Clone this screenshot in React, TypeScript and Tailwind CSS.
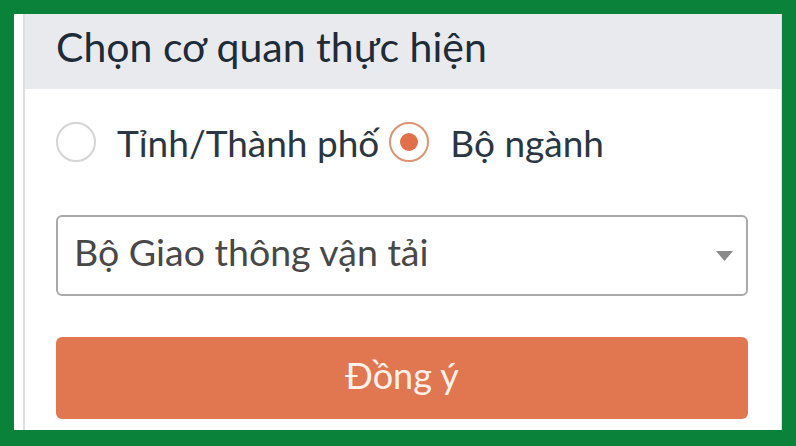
import { useState } from 'react';

const font = { fontFamily: 'Lato, "Noto Sans", sans-serif' };

function Radio({ checked, label, onClick }: { checked: boolean; label: string; onClick: () => void }) {
  return (
    <button type="button" onClick={onClick} className="flex items-center gap-[21px]">
      <span
        className={`flex h-[40px] w-[40px] items-center justify-center rounded-full border-2 bg-white ${
          checked ? 'border-[#dc9373]' : 'border-[#d4d4d4]'
        }`}
      >
        {checked && <span className="h-[18px] w-[18px] rounded-full bg-[#e07049]" />}
      </span>
      <span className="text-[37px] leading-none text-[#2a3641]">{label}</span>
    </button>
  );
}

export default function App() {
  const [type, setType] = useState<'tinh' | 'bo'>('bo');

  return (
    <div className="h-[446px] w-[796px] bg-[#0b823a] pb-[16px] pl-[14px] pr-[14px] pt-[14px]" style={font}>
      <div className="flex h-full bg-white pl-[9px]">
        <div className="flex flex-1 flex-col border-l-2 border-r border-[#dedede]">
          {/* Header */}
          <div className="flex h-[75px] items-center bg-[#e9eaed] pl-[31px] pb-[10px]">
            <h1 className="text-[41px] leading-none text-[#1e2b38]">Chọn cơ quan thực hiện</h1>
          </div>

          {/* Body */}
          <div className="flex flex-col pl-[31px] pr-[33px] pt-[33px]">
            <div className="flex items-center gap-[10px]">
              <Radio checked={type === 'tinh'} label="Tỉnh/Thành phố" onClick={() => setType('tinh')} />
              <Radio checked={type === 'bo'} label="Bộ ngành" onClick={() => setType('bo')} />
            </div>

            <div className="mt-[53px] flex h-[81px] items-center justify-between rounded-[6px] border-2 border-[#a9a9a9] pl-[16px] pr-[13px]">
              <span className="mb-[8px] text-[37.5px] leading-none text-[#484848]">Bộ Giao thông vận tải</span>
              <svg width="17" height="10" viewBox="0 0 17 10">
                <path d="M0 0 L17 0 L8.5 10 Z" fill="#8a8a8a" />
              </svg>
            </div>

            <button
              type="button"
              className="mt-[41px] flex h-[82px] items-center justify-center rounded-[6px] bg-[#e07751] pb-[6px] text-[36px] leading-none text-[#fdf1ea]"
            >
              Đồng ý
            </button>
          </div>
        </div>
      </div>
    </div>
  );
}
